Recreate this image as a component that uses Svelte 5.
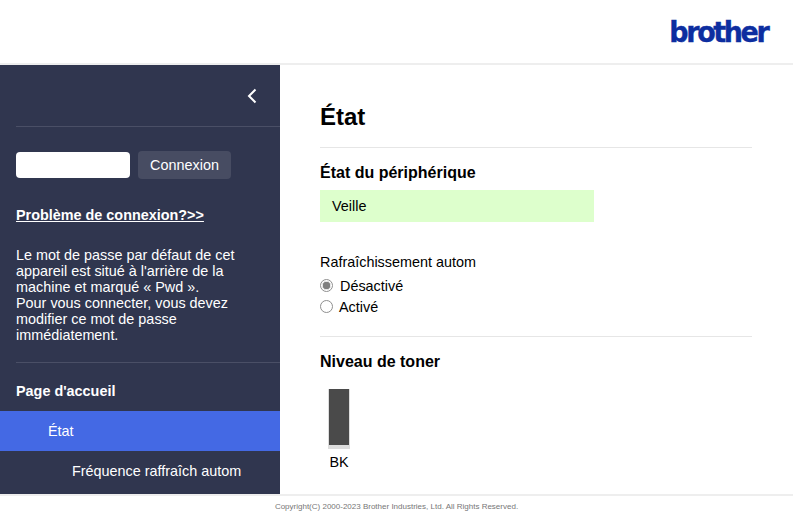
<script lang="ts">
  const help = [
    "Le mot de passe par défaut de cet",
    "appareil est situé à l'arrière de la",
    "machine et marqué « Pwd ».",
    "Pour vous connecter, vous devez",
    "modifier ce mot de passe",
    "immédiatement."
  ];
</script>

<div class="page">
  <header class="top">
    <span class="logo">brother</span>
  </header>

  <div class="middle">
    <aside class="side">
      <div class="collapse">
        <svg width="10" height="16" viewBox="0 0 10 16" aria-hidden="true">
          <path d="M8.5 1.5 2 8l6.5 6.5" fill="none" stroke="#fff" stroke-width="2" />
        </svg>
      </div>

      <div class="login">
        <input class="pwd" type="password" aria-label="Mot de passe" />
        <button class="connect" type="button">Connexion</button>
      </div>

      <a class="trouble" href="#top">Problème de connexion?&gt;&gt;</a>

      <p class="help">
        {#each help as line}
          <span>{line}</span>
        {/each}
      </p>

      <nav class="menu">
        <div class="home">Page d'accueil</div>
        <div class="item current">État</div>
        <div class="item sub">Fréquence raffraîch autom</div>
      </nav>
    </aside>

    <main class="content">
      <h1>État</h1>

      <section class="block">
        <h2>État du périphérique</h2>
        <div class="status">Veille</div>

        <div class="refresh">
          <div class="refresh-label">Rafraîchissement autom</div>
          <label class="radio first">
            <input type="radio" name="refresh" checked />
            <span>Désactivé</span>
          </label>
          <label class="radio">
            <input type="radio" name="refresh" />
            <span>Activé</span>
          </label>
        </div>
      </section>

      <section class="block toner">
        <h2>Niveau de toner</h2>
        <div class="gauge">
          <div class="track"><div class="fill"></div></div>
          <div class="gauge-label">BK</div>
        </div>
      </section>
    </main>
  </div>

  <footer class="foot">Copyright(C) 2000-2023 Brother Industries, Ltd. All Rights Reserved.</footer>
</div>

<style>
  :global(body) {
    margin: 0;
    background: #fff;
  }

  .page {
    width: 793px;
    height: 520px;
    display: flex;
    flex-direction: column;
    overflow: hidden;
    font-family: "Liberation Sans", Arial, sans-serif;
    font-size: 14.4px;
    color: #000;
  }

  .top {
    height: 63px;
    flex: none;
    border-bottom: 2px solid #eee;
    display: flex;
    align-items: center;
    justify-content: flex-end;
    padding-right: 26px;
  }

  .logo {
    font-family: "DejaVu Sans", sans-serif;
    font-weight: 700;
    font-size: 29px;
    line-height: 30px;
    letter-spacing: -2.6px;
    color: #0d2ea0;
    -webkit-text-stroke: 0.4px #0d2ea0;
    transform: scaleX(0.93);
    transform-origin: right center;
  }

  .middle {
    height: 429px;
    flex: none;
    display: flex;
    overflow: hidden;
  }

  .side {
    width: 280px;
    flex: none;
    background: #30364f;
    color: #fff;
    padding-left: 16px;
    box-sizing: border-box;
  }

  .collapse {
    height: 61px;
    border-bottom: 1px solid #4a4f66;
    display: flex;
    justify-content: flex-end;
    align-items: center;
    padding-right: 23px;
  }

  .login {
    display: flex;
    align-items: center;
    gap: 8px;
    margin-top: 24px;
  }

  .pwd {
    width: 114px;
    height: 26px;
    box-sizing: border-box;
    border: 0;
    border-radius: 4px;
    background: #fff;
    padding: 0;
  }

  .connect {
    width: 93px;
    height: 28px;
    border: 0;
    border-radius: 4px;
    background: #474c62;
    color: #fff;
    font: inherit;
    padding: 0;
  }

  .trouble {
    display: block;
    margin-top: 27px;
    font-weight: 700;
    line-height: 18px;
    color: #fff;
  }

  .help {
    margin: 23px 24px 0 0;
    line-height: 16px;
    padding-bottom: 19px;
  }

  .help span {
    display: block;
  }

  .menu {
    margin-left: -16px;
  }

  .home {
    margin-left: 16px;
    border-top: 1px solid #4a4f66;
    height: 48px;
    line-height: 56px;
    font-weight: 700;
  }

  .item {
    height: 40px;
    line-height: 40px;
    padding-left: 48px;
  }

  .current {
    background: #4469e4;
  }

  .sub {
    padding-left: 72px;
  }

  .content {
    flex: 1;
    padding: 0 41px 0 40px;
    min-width: 0;
  }

  h1 {
    margin: 37px 0 0;
    padding-bottom: 15px;
    font-size: 24px;
    line-height: 30px;
    font-weight: 700;
    border-bottom: 1px solid #e6e6e6;
  }

  h2 {
    margin: 0;
    font-size: 16px;
    line-height: 20px;
    font-weight: 700;
  }

  .block {
    padding-top: 15px;
  }

  .status {
    margin-top: 7px;
    width: 274px;
    height: 32px;
    box-sizing: border-box;
    padding-left: 12px;
    line-height: 32px;
    background: #dfc;
  }

  .refresh {
    margin-top: 32px;
    padding-bottom: 19px;
    border-bottom: 1px solid #e6e6e6;
  }

  .refresh-label {
    line-height: 16px;
  }

  .radio {
    display: flex;
    align-items: center;
    height: 21px;
    gap: 6px;
  }

  .radio.first {
    margin-top: 5px;
    gap: 7px;
  }

  .radio input {
    appearance: none;
    box-sizing: border-box;
    width: 13px;
    height: 13px;
    margin: 0;
    border: 1px solid #8f8f8f;
    border-radius: 50%;
    background: #fff;
  }

  .radio input:checked {
    background: radial-gradient(circle, #808080 0 3.5px, #e6e6e6 4px 4.5px, #fff 5px);
  }

  .toner {
    padding-top: 15px;
  }

  .gauge {
    width: 38px;
    margin: 17px 0 0 0;
    display: flex;
    flex-direction: column;
    align-items: center;
  }

  .track {
    width: 22px;
    height: 60px;
    background: #ddd;
    box-sizing: border-box;
    padding: 0 1px;
  }

  .fill {
    height: 56px;
    background: #4a4a4a;
  }

  .gauge-label {
    margin-top: 5px;
    line-height: 16px;
  }

  .foot {
    flex: 1;
    border-top: 2px solid #eee;
    font-size: 8px;
    line-height: 22px;
    text-align: center;
    color: #777;
  }
</style>
